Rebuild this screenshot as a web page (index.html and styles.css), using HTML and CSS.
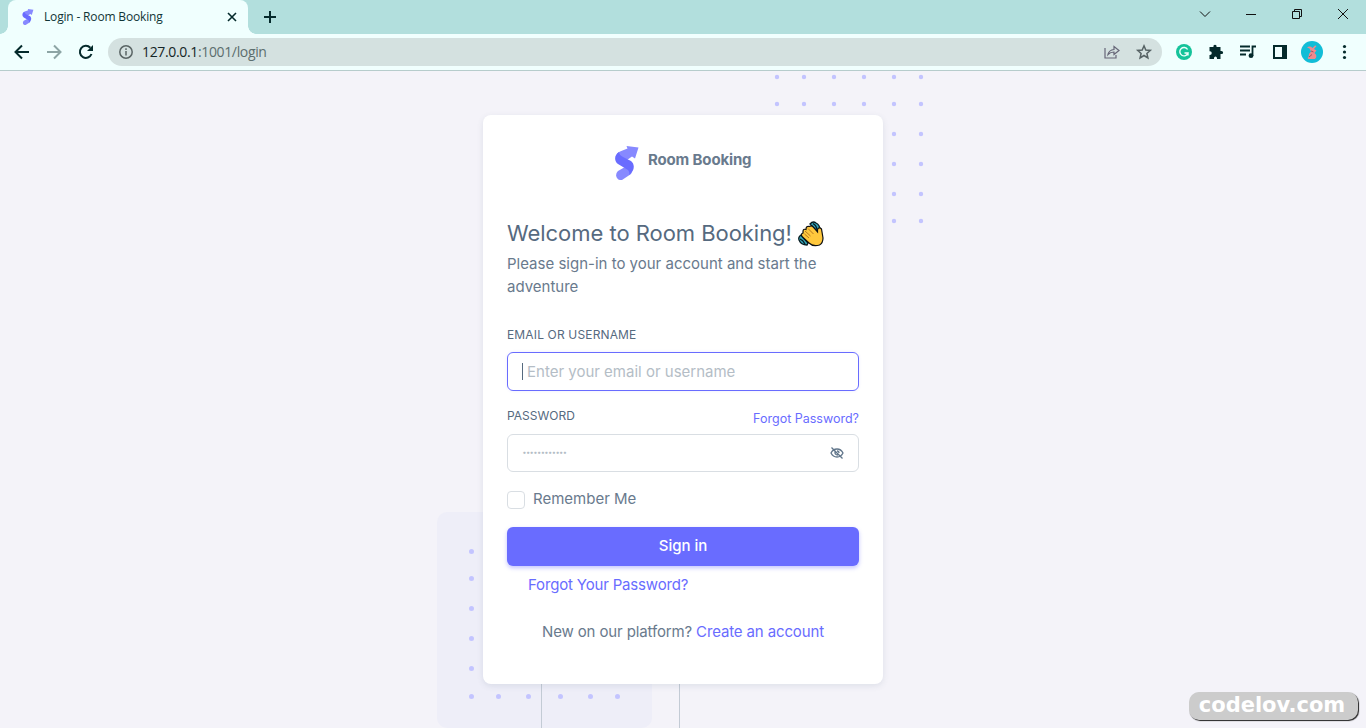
FILE: index.html
```html
<!DOCTYPE html>
<html lang="en">
<head>
<meta charset="utf-8">
<title>Login - Room Booking</title>
<link rel="stylesheet" href="styles.css">
</head>
<body>
<svg width="0" height="0" class="defs">
  <symbol id="logo" viewBox="0 0 24 34">
    <path d="M11.500 0 23.500 1.500 20 12.500 17 10.500 12 14 3 15Q-1 9 5 5.500L12.500 2.500Z" fill="#8789ff"/>
    <path d="M10 21 3 25C-1 29 2 35 7 34L16 28Q19 23 10 21Z" fill="#8789ff"/>
    <path d="M4 6C-1 9 -1 15 3 18L13 24Q15 26 14 29C20 25 20 18 16 15L9 11.500Q4 9 4 6Z" fill="#696cff"/>
  </symbol>
</svg>
<header class="tabs">
  <div class="tab">
    <svg class="favicon"><use href="#logo"/></svg>
    <span class="tab-title">Login - Room Booking</span>
    <svg class="tab-close" viewBox="0 0 10 10"><path d="M1 1 9 9M9 1 1 9"/></svg>
  </div>
  <svg class="plus" viewBox="0 0 12 12"><path d="M6 0V12M0 6H12"/></svg>
  <div class="window-controls">
    <svg viewBox="0 0 12 12"><path d="M1 3.5 6 8.5 11 3.5"/></svg>
    <svg viewBox="0 0 12 12"><path d="M1 6.5H11"/></svg>
    <svg viewBox="0 0 12 12"><path d="M1.5 3.5H8.5V10.5H1.5ZM3.5 3.5V1.5H10.5V8.5H8.5"/></svg>
    <svg viewBox="0 0 12 12"><path d="M1 1 11 11M11 1 1 11"/></svg>
  </div>
</header>
<div class="toolbar">
  <div class="nav">
    <svg viewBox="0 0 16 16"><path d="M15 8H2M8 1.500 1.500 8 8 14.500"/></svg>
    <svg class="off" viewBox="0 0 16 16"><path d="M1 8H14M8 1.500 14.500 8 8 14.500"/></svg>
    <svg viewBox="0 0 16 16"><path d="M13.500 10A6 6 0 1 1 12.300 3.800"/><path class="solid" d="M15 1V7H9Z"/></svg>
  </div>
  <div class="address">
    <svg class="info" viewBox="0 0 14 14"><circle cx="7" cy="7" r="6.200"/><path d="M7 6V10.500M7 3.300V4.900"/></svg>
    <span class="url"><b>127.0.0.1</b>:1001/login</span>
    <svg class="share" viewBox="0 0 16 14"><path d="M1 3V13H12V10M4 9.500Q5 5 10 4.500V1.500L15 5.500 10 9.500V7Q6.500 7 4 9.500Z"/></svg>
    <svg class="star" viewBox="0 0 16 16"><path d="M8 1.800 9.800 6 14.300 6.400 10.900 9.400 11.900 13.900 8 11.500 4.100 13.900 5.100 9.400 1.700 6.400 6.200 6Z"/></svg>
  </div>
  <div class="extensions">
    <svg viewBox="0 0 16 16"><circle cx="8" cy="8" r="8" fill="#15c39a"/><path d="M11.600 5.500A4.200 4.200 0 1 0 12 9H8.500M12 9V11.500" fill="none" stroke="#effffd" stroke-width="1.400"/></svg>
    <svg viewBox="0 0 16 16"><path d="M1.500 3H5.500C4.800 0 9.200 0 8.500 3H12.500V7C16 6.200 16 10.800 12.500 10V15H9C9.500 11.500 5.500 11.500 6 15H1.500V11C4.500 11.500 4.500 6.800 1.500 7.300Z" fill="#042a2b"/></svg>
    <svg viewBox="0 0 16 16"><path d="M0 2.500H10M0 6.500H10M0 10.500H6M12.500 12V2.500H16" fill="none" stroke="#042a2b" stroke-width="1.800"/><circle cx="11" cy="11.700" r="2.400" fill="#042a2b"/></svg>
    <svg viewBox="0 0 16 16"><path d="M1 1H15V15H1ZM3 3V13H10V3Z" fill="#042a2b" fill-rule="evenodd"/></svg>
    <svg class="avatar" viewBox="0 0 22 22"><circle cx="11" cy="11" r="11" fill="#12bdd7"/><path d="M6 6.500Q9 4.500 11.500 7L14 4.500 15.500 5 13 8 15.500 9.500Q14 11 13.500 12Q17 15 14 18H7.500L6.500 17Q8 16 8 13L10 10.500 8.500 7.500Z" fill="#f08a8e"/><path d="M8 16 11 13.500M10 10 12.500 11" stroke="#a35262" fill="none"/></svg>
    <svg class="menu" viewBox="0 0 16 16"><g fill="#042a2b"><circle cx="8.500" cy="2.500" r="1.600"/><circle cx="8.500" cy="8" r="1.600"/><circle cx="8.500" cy="13.500" r="1.600"/></g></svg>
  </div>
</div>
<main class="page">
  <svg class="backdrop" viewBox="0 71 1366 657">
    <rect x="437" y="512" width="215" height="216" rx="10" fill="#eeeef8"/>
    <path d="M541.500 680V728M679.500 680V728" stroke="#c3cbd5"/>
    <g class="dots">
      <path d="M777 77h0M804 77h0M834 77h0M864 77h0M894 77h0M921 77h0M777 104h0M804 104h0M834 104h0M864 104h0M894 104h0M921 104h0M894 134h0M921 134h0M894 164h0M921 164h0M894 194h0M921 194h0M894 221h0M921 221h0"/>
      <path class="large" d="M471.500 551.500h0M471.500 578.500h0M471.500 608.500h0M471.500 638.500h0M471.500 668.500h0M471.500 696.500h0M498.500 696.500h0M528.500 696.500h0M560.500 696.500h0M590.500 696.500h0M617.500 696.500h0"/>
    </g>
  </svg>
  <section class="card">
    <div class="brand"><svg class="brand-logo"><use href="#logo"/></svg><span class="brand-name">Room Booking</span></div>
    <h1><span class="welcome">Welcome to Room Booking!</span>
      <svg class="wave" viewBox="0 0 26 26"><g fill="#35a9bd" stroke="#061b20" stroke-width="1.300"><path d="M12 3Q15-.5 18 2Q22 4 22 9L18 9Z"/><path d="M3 14Q0 16 1 19Q3 24 9 24L10 22Z"/><path d="M15 2.500Q18 4 19 8M2 18Q5 19 7 23" fill="none"/></g><path d="M5 10.500Q5 7.500 8 8.500Q8 4.500 11.500 5.500Q14 4 16 7L19.500 11 19.500 8.500Q21 5.500 23.500 8L25 17Q25 22 21.500 24Q15 26 11 22L4.500 16Q2 13 5 12Z" fill="#ffc83d" stroke="#101010" stroke-width="1.200"/><path d="M7 10 12.500 15M10 7.500 15.500 13M6.500 13 11 17" fill="none" stroke="#b87822"/></svg>
    </h1>
    <p class="intro">Please sign-in to your account and start the<br>adventure</p>
    <div class="label label-email">EMAIL OR USERNAME</div>
    <div class="field focused"><i class="caret"></i><span>Enter your email or username</span></div>
    <div class="password-row"><span class="label">PASSWORD</span><a class="forgot">Forgot Password?</a></div>
    <div class="field password"><span class="bullets">············</span>
      <svg class="eye" viewBox="0 0 14 14"><path d="M1 7Q3 3 7 3T13 7Q11 11 7 11T1 7ZM1.500 1.500 12.500 12.500M5 5.500Q4.500 9 8 9M7 5Q9 5 9 7"/></svg></div>
    <div class="remember"><i class="box"></i><span>Remember Me</span></div>
    <div class="button">Sign in</div>
    <div class="reset"><a>Forgot Your Password?</a></div>
    <div class="signup"><span>New on our platform?</span><a>Create an account</a></div>
  </section>
  <div class="watermark">codelov.com</div>
</main>
</body>
</html>
```
FILE: styles.css
```css
* { box-sizing: border-box; }
body { margin: 0; width: 1366px; height: 728px; overflow: hidden; display: flex; flex-direction: column; font-family: Inter, sans-serif; color: #697a8d; }
svg { display: block; flex: none; overflow: visible; }
.defs { position: absolute; }
.tabs { height: 34px; flex: none; background: #b2dfdd; display: flex; align-items: center; padding-left: 8px; }
.tab { position: relative; width: 240px; height: 34px; background: #f0fffe; border-radius: 8px 8px 0 0; display: flex; align-items: center; padding: 0 11px 0 14px; }
.tab::before, .tab::after { content: ""; position: absolute; bottom: 0; width: 8px; height: 8px; }
.tab::before { left: -8px; background: radial-gradient(circle at 0 0, transparent 7.5px, #f0fffe 8px); }
.tab::after { right: -8px; background: radial-gradient(circle at 100% 0, transparent 7.5px, #f0fffe 8px); }
.favicon { width: 12px; height: 16px; margin-right: 10px; }
.tab-title { font: 12px/16px "Open Sans", sans-serif; letter-spacing: -0.17px; color: #103536; flex: 1; white-space: nowrap; }
.tab-close { width: 10px; height: 10px; stroke: #042a2b; stroke-width: 1.6; }
.plus { width: 12px; height: 12px; margin-left: 16px; stroke: #042a2b; stroke-width: 2; }
.window-controls { margin: -6px 17px 0 auto; display: flex; gap: 34px; }
.window-controls svg { width: 12px; height: 12px; fill: none; stroke: #111; stroke-width: 1; }
.toolbar { height: 37px; flex: none; background: #f0fffe; border-bottom: 1px solid #b6cccc; display: flex; align-items: center; padding: 0 14px; }
.nav { display: flex; gap: 16px; width: 94px; }
.nav svg { width: 16px; height: 16px; fill: none; stroke: #042a2b; stroke-width: 2; }
.nav .off { stroke: #8da5a5; }
.nav .solid { fill: #042a2b; stroke: none; }
.address { width: 1054px; height: 28px; border-radius: 14px; background: #d4e1e0; display: flex; align-items: center; padding: 0 10px 0 11px; }
.info { width: 14px; height: 14px; fill: none; stroke: #5a6565; stroke-width: 1.5; margin-right: 9px; }
.url { font: 14px/20px "Open Sans", sans-serif; letter-spacing: -0.35px; color: #5c6e6e; flex: 1; }
.url b { font-weight: 400; color: #142526; }
.share { width: 16px; height: 14px; fill: none; stroke: #667; stroke-width: 1.2; margin-right: 16px; }
.star { width: 16px; height: 16px; fill: none; stroke: #566264; stroke-width: 1.5; }
.extensions { display: flex; align-items: center; gap: 16px; margin-left: 14px; }
.extensions svg { width: 16px; height: 16px; }
.extensions .avatar { width: 22px; height: 22px; margin: 0 -3px; }
.page { flex: 1; position: relative; background: #f4f3f9; padding-top: 44px; }
.backdrop { position: absolute; left: 0; top: 0; width: 1366px; height: 657px; }
.dots { stroke: #c3c4ff; stroke-width: 4.4; stroke-linecap: round; }
.large { stroke-width: 5; }
.card { position: relative; width: 400px; height: 569px; margin: 0 auto; padding: 30px 24px; background: #fff; border-radius: 8px; box-shadow: 0 2px 6px rgba(67,89,113,.12); font-size: 15px; line-height: 23px; white-space: nowrap; }
.brand { display: flex; height: 76px; padding-left: 108px; }
.brand-logo { width: 24px; height: 34px; margin: 1px 9px 0 0; }
.brand-name { font-weight: 700; line-height: 30px; letter-spacing: -0.15px; }
h1 { margin: 0; height: 25px; font-size: 22px; line-height: 25px; font-weight: 400; letter-spacing: -0.04px; display: flex; gap: 6px; color: #566a7f; }
.welcome { width: 285px; }
.wave { width: 26px; height: 26px; }
.intro { margin: 6px 0 28px; }
.label { font-size: 12px; line-height: 18px; color: #566a7f; }
.label-email { letter-spacing: 0.15px; }
.field { height: 39px; border: 1px solid #d9dee3; border-radius: 6px; display: flex; align-items: center; padding: 0 14px 1px; color: #b4bdc6; }
.focused { margin-top: 8px; border-color: #696cff; box-shadow: 0 0 3px rgba(105,108,255,.12); }
.caret { width: 1px; height: 17px; background: #566a7f; margin: 1px 4px 0 0; }
.password-row { height: 43px; display: flex; justify-content: space-between; padding-top: 16px; }
.forgot { font-size: 12.5px; line-height: 23px; }
a { color: #696cff; }
.password { height: 38px; justify-content: space-between; }
.bullets { letter-spacing: -1.1px; font-weight: 600; }
.eye { width: 14px; height: 14px; fill: none; stroke: #60758a; stroke-width: 1.3; }
.remember { height: 55px; display: flex; padding-top: 15px; gap: 8px; }
.box { width: 18px; height: 18px; border: 1px solid #d9dee3; border-radius: 4px; margin-top: 4px; }
.button { height: 39px; background: #696cff; color: #fff; border-radius: 6px; text-align: center; line-height: 38px; font-weight: 500; box-shadow: 0 2px 4px rgba(105,108,255,.4); }
.reset { margin-top: 7px; padding-left: 21px; letter-spacing: -0.17px; }
.signup { margin-top: 24px; padding-left: 35px; display: flex; gap: 4px; letter-spacing: -0.13px; }
.watermark { position: absolute; right: 8px; bottom: 8px; width: 169px; height: 28px; padding-right: 3px; border-radius: 10px; background: #ccc; box-shadow: 1px 1px 1px #222; color: #fff; text-align: center; font: bold 21px/27px "DejaVu Sans", sans-serif; }
```
